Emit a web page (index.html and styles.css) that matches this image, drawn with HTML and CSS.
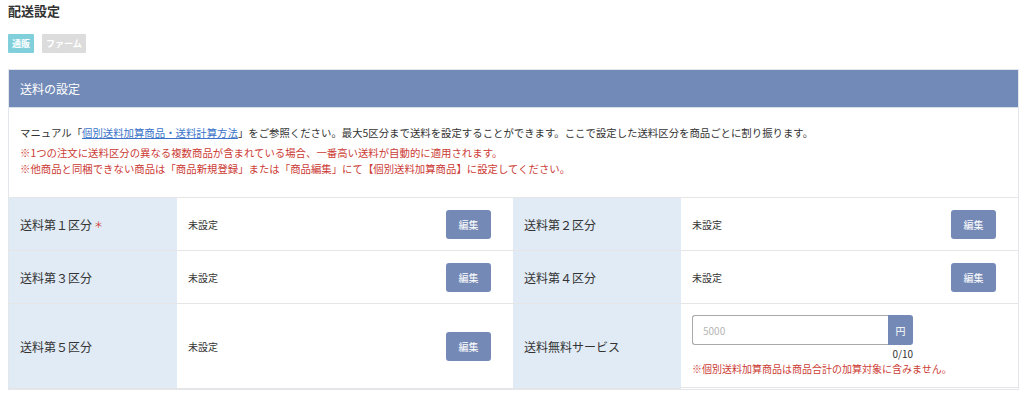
FILE: index.html
```html
<!DOCTYPE html>
<html lang="ja">
<head>
    <meta charset="UTF-8" />
    <title>配送設定</title>
    <link rel="stylesheet" href="styles.css">
</head>
<body>
    <h1 class="page-title">配送設定</h1>

    <div class="tabs">
        <span class="tab tab-active">通販</span>
        <span class="tab">ファーム</span>
    </div>

    <div class="panel">
        <div class="panel-header">送料の設定</div>
        <div class="panel-body">
            <p class="note">マニュアル「<a href="#">個別送料加算商品・送料計算方法</a>」をご参照ください。最大5区分まで送料を設定することができます。ここで設定した送料区分を商品ごとに割り振ります。</p>
            <p class="warn">※1つの注文に送料区分の異なる複数商品が含まれている場合、一番高い送料が自動的に適用されます。<br>※他商品と同梱できない商品は「商品新規登録」または「商品編集」にて【個別送料加算商品】に設定してください。</p>
        </div>

        <div class="fee-grid">
            <div class="cell-label">送料第１区分 <span class="required">＊</span></div>
            <div class="cell-value"><span>未設定</span><button class="btn-edit">編集</button></div>
            <div class="cell-label">送料第２区分</div>
            <div class="cell-value"><span>未設定</span><button class="btn-edit">編集</button></div>

            <div class="cell-label">送料第３区分</div>
            <div class="cell-value"><span>未設定</span><button class="btn-edit">編集</button></div>
            <div class="cell-label">送料第４区分</div>
            <div class="cell-value"><span>未設定</span><button class="btn-edit">編集</button></div>

            <div class="cell-label tall">送料第５区分</div>
            <div class="cell-value tall"><span>未設定</span><button class="btn-edit">編集</button></div>
            <div class="cell-label tall">送料無料サービス</div>
            <div class="cell-value tall free">
                <div class="input-group">
                    <input type="text" placeholder="5000" />
                    <span class="addon">円</span>
                </div>
                <div class="counter">0/10</div>
                <div class="free-note">※個別送料加算商品は商品合計の加算対象に含みません。</div>
            </div>
        </div>
    </div>
</body>
</html>
```

FILE: styles.css
```css
body {
    font-family: "Noto Sans CJK JP", "Noto Sans", sans-serif;
    color: #333;
    margin: 0;
    padding: 0 5px 0 8px;
    background: #fff;
}

.page-title {
    font-size: 13px;
    font-weight: bold;
    line-height: 22px;
    margin: 0;
}

.tabs {
    display: flex;
    gap: 8px;
    margin-top: 12px;
}

.tab {
    display: inline-block;
    background: #dcdcdc;
    color: #fff;
    font-size: 9px;
    font-weight: bold;
    line-height: 19px;
    padding: 0 4px;
    border-radius: 1px;
}

.tab-active {
    background: #82cfdc;
}

.panel {
    margin-top: 16px;
    border: 1px solid #e3e6ea;
}

.panel-header {
    background: #728ab7;
    color: #fff;
    font-size: 12px;
    line-height: 37px;
    padding-left: 11px;
    border-bottom: 1px solid #d7dfeb;
}

.panel-body {
    padding: 16px 11px 20px;
    font-size: 10.4px;
}

.panel-body p {
    margin: 0;
}

.note {
    line-height: 18px;
    color: #333;
}

.note a {
    color: #3a73c9;
}

.warn {
    margin-top: 3px !important;
    line-height: 16px;
    color: #cc3b35;
}

.fee-grid {
    display: grid;
    grid-template-columns: 168px 336px 168px 1fr;
    border-top: 1px solid #e6e6e6;
}

.cell-label {
    background: #e1ebf5;
    font-size: 12px;
    height: 52px;
    padding-left: 11px;
    display: flex;
    align-items: center;
    border-bottom: 1px solid #e6e6e6;
}

.required {
    color: #d0342c;
    margin-left: 2px;
    font-size: 9px;
}

.cell-value {
    font-size: 10px;
    height: 52px;
    padding: 0 22px 0 11px;
    display: flex;
    align-items: center;
    justify-content: space-between;
    border-bottom: 1px solid #e6e6e6;
}

.cell-label.tall, .cell-value.tall {
    height: 84px;
}

.btn-edit {
    background: #7489b5;
    border: none;
    color: #fff;
    font-family: inherit;
    font-size: 10px;
    width: 45px;
    height: 29px;
    border-radius: 3px;
    padding: 0;
}

.cell-value.free {
    display: block;
    padding-top: 11px;
    box-sizing: border-box;
}

.input-group {
    display: flex;
    width: 221px;
    height: 30px;
}

.input-group input {
    flex: 1;
    min-width: 0;
    border: 1px solid #a9a9a9;
    border-right: none;
    border-radius: 3px 0 0 3px;
    padding: 0 10px;
    font-family: inherit;
    font-size: 10px;
    color: #333;
}

.input-group input::placeholder {
    color: #b5b5b5;
}

.addon {
    width: 25px;
    background: #7489b5;
    color: #fff;
    font-size: 10px;
    display: flex;
    align-items: center;
    justify-content: center;
    border-radius: 0 3px 3px 0;
}

.counter {
    width: 221px;
    text-align: right;
    font-size: 10px;
    line-height: 16px;
    margin-top: 1px;
}

.free-note {
    color: #cc3b35;
    font-size: 10px;
    line-height: 14px;
}
```
